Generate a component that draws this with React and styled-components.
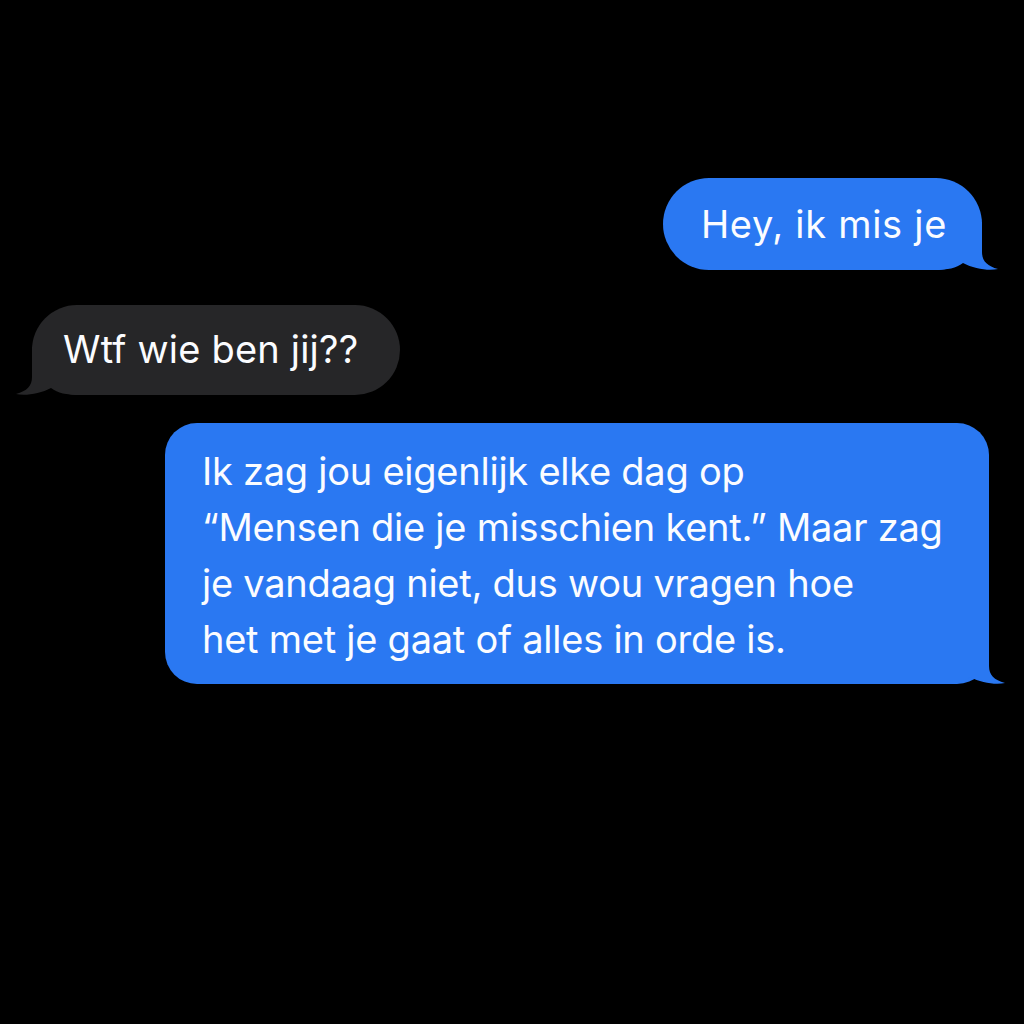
import React from 'react';
import styled, { createGlobalStyle } from 'styled-components';

const GlobalStyle = createGlobalStyle`
  html, body {
    margin: 0;
    padding: 0;
    background: #000;
  }
`;

const Screen = styled.div`
  width: 1024px;
  min-height: 1024px;
  background: #000;
  font-family: Inter, "Liberation Sans", Arial, sans-serif;
  display: flex;
  flex-direction: column;
  padding-top: 178px;
  box-sizing: border-box;
`;

const Bubble = styled.div`
  position: relative;
  box-sizing: border-box;
  align-self: ${props => (props.$mine ? 'flex-end' : 'flex-start')};
  margin-top: ${props => props.$top || 0}px;
  margin-right: ${props => (props.$mine ? props.$side : 0)}px;
  margin-left: ${props => (props.$mine ? 0 : props.$side)}px;
  width: ${props => (props.$width ? `${props.$width}px` : 'auto')};
  padding: ${props => props.$pad};
  border-radius: ${props => props.$radius}px;
  background: ${props => (props.$mine ? '#2a78f2' : '#262628')};
  color: #fbfcff;
  font-size: 38px;
  line-height: 56px;
  letter-spacing: ${props => props.$spacing || 0}px;
  white-space: nowrap;
`;

const Text = styled.span`
  position: relative;
`;

const TailSvg = styled.svg`
  position: absolute;
  bottom: 0;
  width: 64px;
  height: 48px;
  ${props => (props.$mine ? 'right: -16px;' : 'left: -16px; transform: scaleX(-1);')}
`;

const Tail = ({ mine }) => (
  <TailSvg $mine={mine} viewBox="0 0 64 48">
    <path
      d="M0 0H48V30C48 39 53 44 64 47C55 49 40 47 29 41C22 46 14 48 0 48Z"
      fill={mine ? '#2a78f2' : '#262628'}
    />
  </TailSvg>
);

const App = () => (
  <>
    <GlobalStyle />
    <Screen>
      <Bubble $mine $side={42} $pad="18px 35px 18px 38px" $radius={46} $spacing={0.7}>
        <Tail mine />
        <Text>Hey, ik mis je</Text>
      </Bubble>
      <Bubble $top={35} $side={32} $pad="16px 42px 18px 31px" $radius={45} $spacing={0.2}>
        <Tail />
        <Text>Wtf wie ben jij??</Text>
      </Bubble>
      <Bubble $mine $top={28} $side={35} $width={824} $pad="20px 40px 17px 37px" $radius={32} $spacing={-0.25}>
        <Tail mine />
        <Text>
          Ik zag jou eigenlijk elke dag op
          <br />
          “Mensen die je misschien kent.” Maar zag
          <br />
          je vandaag niet, dus wou vragen hoe
          <br />
          het met je gaat of alles in orde is.
        </Text>
      </Bubble>
    </Screen>
  </>
);

export default App;
